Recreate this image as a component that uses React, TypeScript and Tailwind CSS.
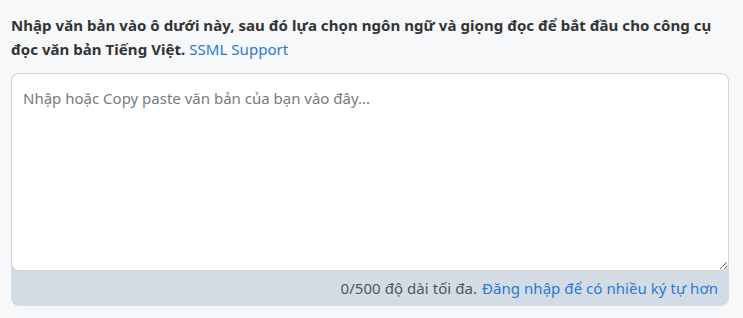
export default function App() {
  return (
    <div className="h-[318px] w-[743px] overflow-hidden bg-[#f7f8fa] font-['Noto_Sans',sans-serif]">
      <div className="px-[11px] pt-[13px]">
        <p className="text-[15px] leading-[24px] tracking-[0.05px] text-[#333]">
          <span className="font-bold">
            Nhập văn bản vào ô dưới này, sau đó lựa chọn ngôn ngữ và giọng đọc để bắt đầu cho công cụ đọc văn bản Tiếng Việt.
          </span>{' '}
          <a href="#" className="text-[#2a7ad3]">SSML Support</a>
        </p>
        <div className="mt-[12px] mr-[3px] overflow-hidden rounded-[8px] bg-[#d3dce5]">
          <textarea
            className="block h-[198px] w-full resize-y rounded-[8px] border border-[#cfd4da] bg-white px-[11px] py-[12px] text-[15px] leading-[24px] text-[#333] outline-none placeholder:text-[#7a7a7a]"
            placeholder="Nhập hoặc Copy paste văn bản của bạn vào đây..."
          />
          <div className="flex h-[35px] items-center justify-end pr-[11px] text-[15px] tracking-[0.05px] text-[#555]">
            <span>0/500 độ dài tối đa.</span>
            <a href="#" className="ml-[5px] text-[#2a7ad3]">Đăng nhập để có nhiều ký tự hơn</a>
          </div>
        </div>
      </div>
    </div>
  );
}
